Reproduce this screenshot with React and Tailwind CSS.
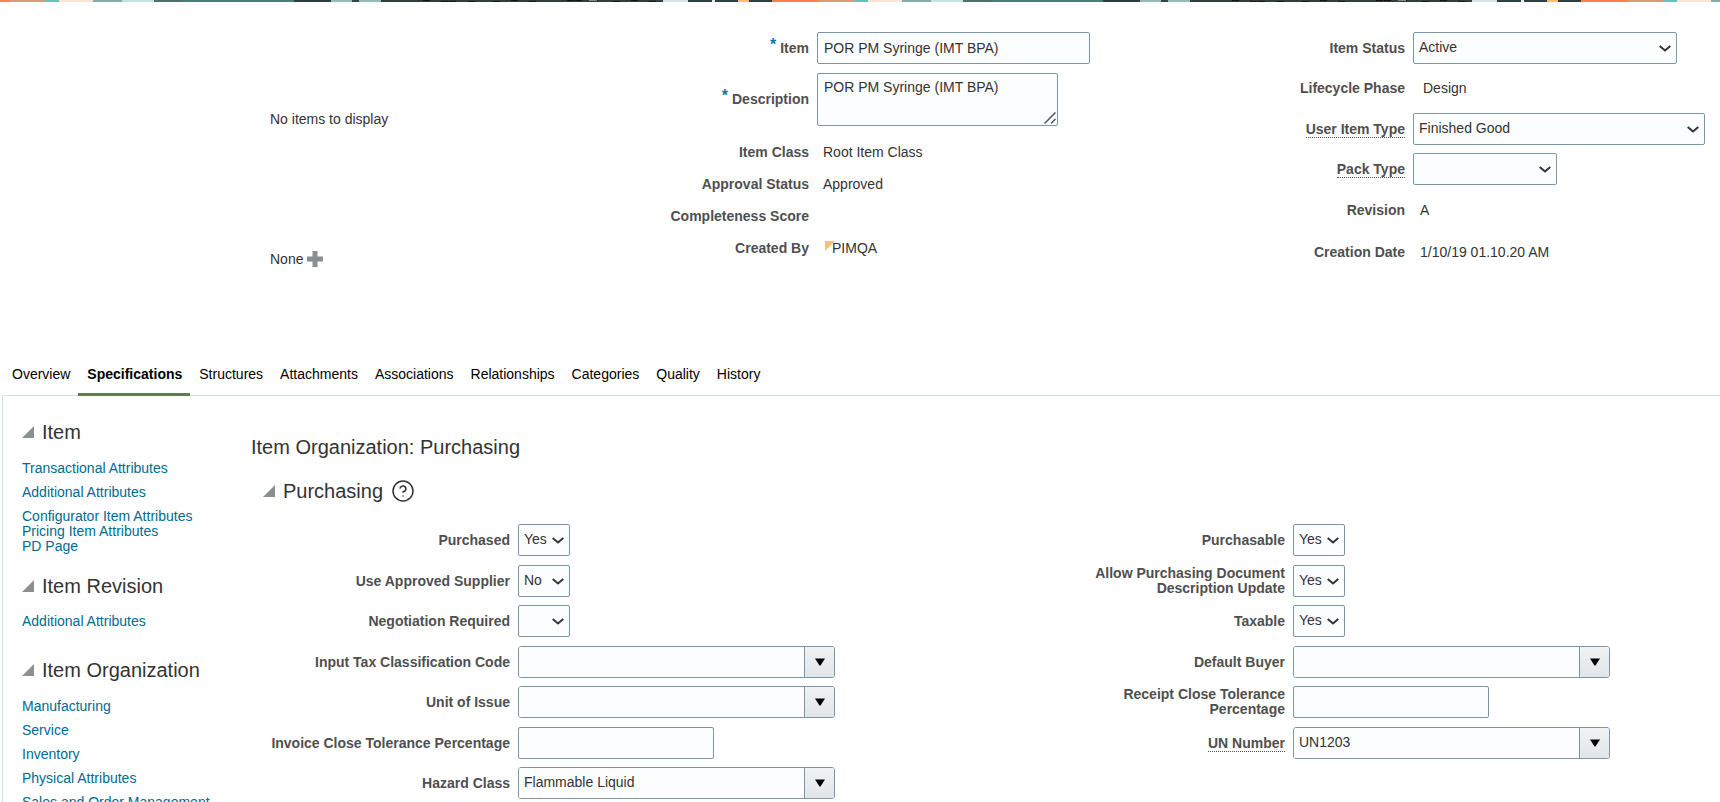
import { CircleHelp } from 'lucide-react'

const itemLinks = ['Transactional Attributes', 'Additional Attributes']
const itemPageLinks = ['Configurator Item Attributes', 'Pricing Item Attributes', 'PD Page']
const organizationLinks = [
  'Manufacturing',
  'Service',
  'Inventory',
  'Physical Attributes',
  'Sales and Order Management',
]

const tabs = [
  'Overview',
  'Specifications',
  'Structures',
  'Attachments',
  'Associations',
  'Relationships',
  'Categories',
  'Quality',
  'History',
]

// [x, width, colour] of each band in one repeat of the banner
const bannerBands = [
  [0, 47, '#ff7f45'],
  [47, 35, '#d79a7e'],
  [82, 14, '#5fc4bc'],
  [96, 34, '#ffe3d6'],
  [130, 29, '#86aca7'],
  [159, 32, '#c4e3e3'],
  [191, 28, '#50716a'],
  [219, 112, '#4a7c78'],
  [331, 37, '#2c3e3e'],
  [368, 21, '#95bbb8'],
  [389, 7, '#33494a'],
  [396, 22, '#95bbb8'],
  [418, 282, '#303f3e'],
  [700, 25, '#d8e3e4'],
  [725, 24, '#2f4040'],
  [749, 3, '#e6eceb'],
  [752, 23, '#2f4040'],
  [775, 11, '#ffbc6c'],
  [786, 23, '#2f4040'],
]

const bannerSpecks = [460, 478, 486, 505, 530, 548, 566, 604, 612, 628, 650, 668, 686]

function Banner() {
  return (
    <svg className="block h-0.5 w-full shrink-0" aria-hidden="true">
      <defs>
        <pattern id="banner" x="-37" width="809" height="2" patternUnits="userSpaceOnUse">
          {bannerBands.map(([x, width, fill]) => (
            <rect key={x} x={x} width={width} height="2" fill={fill} />
          ))}
          {bannerSpecks.map((x) => (
            <rect key={x} x={x} y={x % 4 === 0 ? 0 : 1} width="7" height="1" fill="#171412" />
          ))}
          <rect x="626" width="8" height="1" fill="#8a8580" />
        </pattern>
      </defs>
      <rect width="100%" height="2" fill="url(#banner)" />
    </svg>
  )
}

function Row({ label, id, required, hint, children }) {
  const Tag = id ? 'label' : 'span'
  return (
    <div className="flex items-center gap-2">
      <Tag htmlFor={id} className="w-[200px] shrink-0 text-right leading-[15px] font-bold text-[#4f4f4f]">
        {required && <span className="mr-1 align-[3px] text-base leading-0 text-[#0e76b0]">*</span>}
        <span className={hint ? 'border-b border-dotted border-[#4f4f4f]' : ''}>{label}</span>
      </Tag>
      {children}
    </div>
  )
}

function Select({ id, value, className }) {
  return (
    <span className={`relative inline-flex h-8 ${className}`}>
      <select
        id={id}
        defaultValue={value}
        className="w-full appearance-none rounded-xs border border-[#7e96a3] bg-[#fcfdfe] pr-5 pb-0.5 pl-[5px] text-[#333]"
      >
        <option>{value}</option>
      </select>
      <svg
        className="pointer-events-none absolute top-[13px] right-1.5 h-[7px] w-3"
        viewBox="0 0 12 7"
        fill="none"
        stroke="#333"
        strokeWidth="2"
        aria-hidden="true"
      >
        <path d="M0.7 1L6 5.4L11.3 1" />
      </svg>
    </span>
  )
}

function TextBox({ id, value, className }) {
  return (
    <input
      id={id}
      type="text"
      defaultValue={value}
      className={`h-8 rounded-xs border border-[#7e96a3] bg-[#fcfdfe] text-[#333] ${className}`}
    />
  )
}

function TextArea({ id, value }) {
  return (
    <span className="relative flex">
      <textarea
        id={id}
        defaultValue={value}
        className="h-[53px] w-[241px] resize-none rounded-xs border border-[#7e96a3] bg-[#fcfdfe] px-1.5 py-1 leading-[18px] text-[#333]"
      />
      <svg
        className="pointer-events-none absolute right-0.5 bottom-0.5 size-3"
        viewBox="0 0 12 12"
        stroke="#555"
        strokeWidth="1.5"
        aria-hidden="true"
      >
        <path d="M0.5 11.5L11.5 0.5M7 11.5L11.5 7" />
      </svg>
    </span>
  )
}

function ComboBox({ id, value }) {
  return (
    <span className="flex h-8 w-[317px] overflow-hidden rounded-[3px] border border-[#7e96a3]">
      <input
        id={id}
        type="text"
        defaultValue={value}
        className="min-w-0 flex-1 bg-[#fcfdfe] pb-0.5 pl-[5px] text-[#333]"
      />
      <button
        type="button"
        aria-label="Open list"
        className="flex w-[30px] items-center justify-center border-l border-[#7e96a3] bg-gradient-to-b from-[#f1f3f4] to-[#e1e5e8]"
      >
        <svg className="h-2 w-2.5" viewBox="0 0 10 8" aria-hidden="true">
          <path d="M0 0.5h10L5.5 7.5h-1z" fill="#000" />
        </svg>
      </button>
    </span>
  )
}

function Heading({ children, className = '' }) {
  return (
    <h2 className={`flex items-center gap-2 text-xl leading-6 text-[#333] ${className}`}>
      <button type="button" aria-label="Collapse">
        <svg className="size-3" viewBox="0 0 12 12" aria-hidden="true">
          <path d="M12 0v12H0z" fill="#8a8f91" />
        </svg>
      </button>
      {children}
    </h2>
  )
}

function Links({ items, className = '' }) {
  return (
    <ul className={`flex flex-col ${className}`}>
      {items.map((item) => (
        <li key={item}>
          <a href="#" className="block leading-[15px] whitespace-nowrap text-[#006b8f] hover:underline">
            {item}
          </a>
        </li>
      ))}
    </ul>
  )
}

function ItemHeader() {
  return (
    <header className="flex h-[329px] shrink-0 pt-[30px]">
      <div className="w-[609px] shrink-0 pl-[270px]">
        <p className="pt-[77px] leading-5">No items to display</p>
        <p className="flex items-center gap-1 pt-[120px] leading-5">
          None
          <button type="button" aria-label="Add">
            <svg className="size-4" viewBox="0 0 16 16" aria-hidden="true">
              <path d="M5.5 0h5v5.5H16v5h-5.5V16h-5v-5.5H0v-5h5.5z" fill="#8a8f91" />
            </svg>
          </button>
        </p>
      </div>

      <div className="flex flex-1 flex-col">
        <div className="flex flex-col gap-[9px]">
          <Row label="Item" id="item" required>
            <TextBox id="item" value="POR PM Syringe (IMT BPA)" className="w-[273px] px-1.5" />
          </Row>
          <Row label="Description" id="description" required>
            <TextArea id="description" value="POR PM Syringe (IMT BPA)" />
          </Row>
        </div>
        <div className="flex flex-col gap-[17px] pt-[19px]">
          <Row label="Item Class">
            <span className="pl-1.5 leading-[15px]">Root Item Class</span>
          </Row>
          <Row label="Approval Status">
            <span className="pl-1.5 leading-[15px]">Approved</span>
          </Row>
          <Row label="Completeness Score" />
          <Row label="Created By">
            <span className="relative pl-[15px] leading-[15px]">
              <svg className="absolute top-0 left-2 size-2.5" viewBox="0 0 10 10" aria-hidden="true">
                <path d="M0 0h10L0 10z" fill="#fbbf77" />
              </svg>
              <span className="relative">PIMQA</span>
            </span>
          </Row>
        </div>
      </div>

      <div className="flex w-[515px] shrink-0 flex-col">
        <Row label="Item Status" id="status">
          <Select id="status" value="Active" className="w-[264px]" />
        </Row>
        <div className="py-4">
          <Row label="Lifecycle Phase">
            <span className="pl-2.5 leading-[17px]">Design</span>
          </Row>
        </div>
        <div className="flex flex-col gap-2">
          <Row label="User Item Type" id="user-type" hint>
            <Select id="user-type" value="Finished Good" className="w-[292px]" />
          </Row>
          <Row label="Pack Type" id="pack-type" hint>
            <Select id="pack-type" value="" className="w-[144px]" />
          </Row>
        </div>
        <div className="flex flex-col gap-[27px] pt-[18px]">
          <Row label="Revision">
            <span className="pl-[7px] leading-[15px]">A</span>
          </Row>
          <Row label="Creation Date">
            <span className="pl-[7px] leading-[15px]">1/10/19 01.10.20 AM</span>
          </Row>
        </div>
      </div>
    </header>
  )
}

function Tabs() {
  return (
    <nav className="flex shrink-0 pl-[3px] text-black">
      {tabs.map((tab) =>
        tab === 'Specifications' ? (
          <a
            key={tab}
            href="#"
            aria-current="page"
            className="relative -mb-px border-b-3 border-[#5f7d4f] pt-[33px] pr-2 pb-[9px] pl-[9px] leading-5 font-bold"
          >
            {tab}
          </a>
        ) : (
          <a key={tab} href="#" className="pt-[33px] pr-2 pb-[9px] pl-[9px] leading-5">
            {tab}
          </a>
        )
      )}
    </nav>
  )
}

function Sidebar() {
  return (
    <aside className="w-[230px] shrink-0 pt-6 pl-[19px]">
      <Heading>Item</Heading>
      <Links items={itemLinks} className="gap-[9px] pt-[17px]" />
      <Links items={itemPageLinks} className="pt-[9px]" />
      <Heading className="pt-5">Item Revision</Heading>
      <Links items={['Additional Attributes']} className="pt-4" />
      <Heading className="pt-[29px]">Item Organization</Heading>
      <Links items={organizationLinks} className="gap-[9px] pt-[17px]" />
    </aside>
  )
}

function Purchasing() {
  return (
    <main className="flex-1 pt-[39px] pl-[18px]">
      <h1 className="text-xl leading-6 text-[#333]">Item Organization: Purchasing</h1>
      <Heading className="pt-5 pl-3">
        Purchasing
        <button type="button" aria-label="Help">
          <CircleHelp className="size-6" strokeWidth={1.5} />
        </button>
      </Heading>

      <div className="flex pt-[21px] [&_label]:w-[259px]">
        <div className="grid flex-1 auto-rows-[41px_40px] items-start">
          <Row label="Purchased" id="purchased">
            <Select id="purchased" value="Yes" className="w-[52px]" />
          </Row>
          <Row label="Use Approved Supplier" id="approved-supplier">
            <Select id="approved-supplier" value="No" className="w-[52px]" />
          </Row>
          <Row label="Negotiation Required" id="negotiation">
            <Select id="negotiation" value="" className="w-[52px]" />
          </Row>
          <Row label="Input Tax Classification Code" id="tax-code">
            <ComboBox id="tax-code" />
          </Row>
          <Row label="Unit of Issue" id="unit">
            <ComboBox id="unit" />
          </Row>
          <Row label="Invoice Close Tolerance Percentage" id="invoice-tolerance">
            <TextBox id="invoice-tolerance" className="w-[196px] px-1.5" />
          </Row>
          <Row label="Hazard Class" id="hazard">
            <ComboBox id="hazard" value="Flammable Liquid" />
          </Row>
        </div>

        <div className="grid w-[694px] shrink-0 auto-rows-[41px_40px] items-start">
          <Row label="Purchasable" id="purchasable">
            <Select id="purchasable" value="Yes" className="w-[52px]" />
          </Row>
          <Row label={<>Allow Purchasing Document<br />Description Update</>} id="allow-update">
            <Select id="allow-update" value="Yes" className="w-[52px]" />
          </Row>
          <Row label="Taxable" id="taxable">
            <Select id="taxable" value="Yes" className="w-[52px]" />
          </Row>
          <Row label="Default Buyer" id="buyer">
            <ComboBox id="buyer" />
          </Row>
          <Row label={<>Receipt Close Tolerance<br />Percentage</>} id="receipt-tolerance">
            <TextBox id="receipt-tolerance" className="w-[196px] px-1.5" />
          </Row>
          <Row label="UN Number" id="un-number" hint>
            <ComboBox id="un-number" value="UN1203" />
          </Row>
        </div>
      </div>
    </main>
  )
}

export default function App() {
  return (
    <div className="flex h-screen flex-col overflow-hidden bg-white font-['Liberation_Sans',Arial,sans-serif] text-sm text-[#333]">
      <Banner />
      <ItemHeader />
      <Tabs />
      <div className="ml-0.5 flex min-h-0 flex-1 overflow-hidden rounded-tl-xs border-t border-l border-[#d3dde5]">
        <Sidebar />
        <Purchasing />
      </div>
    </div>
  )
}
